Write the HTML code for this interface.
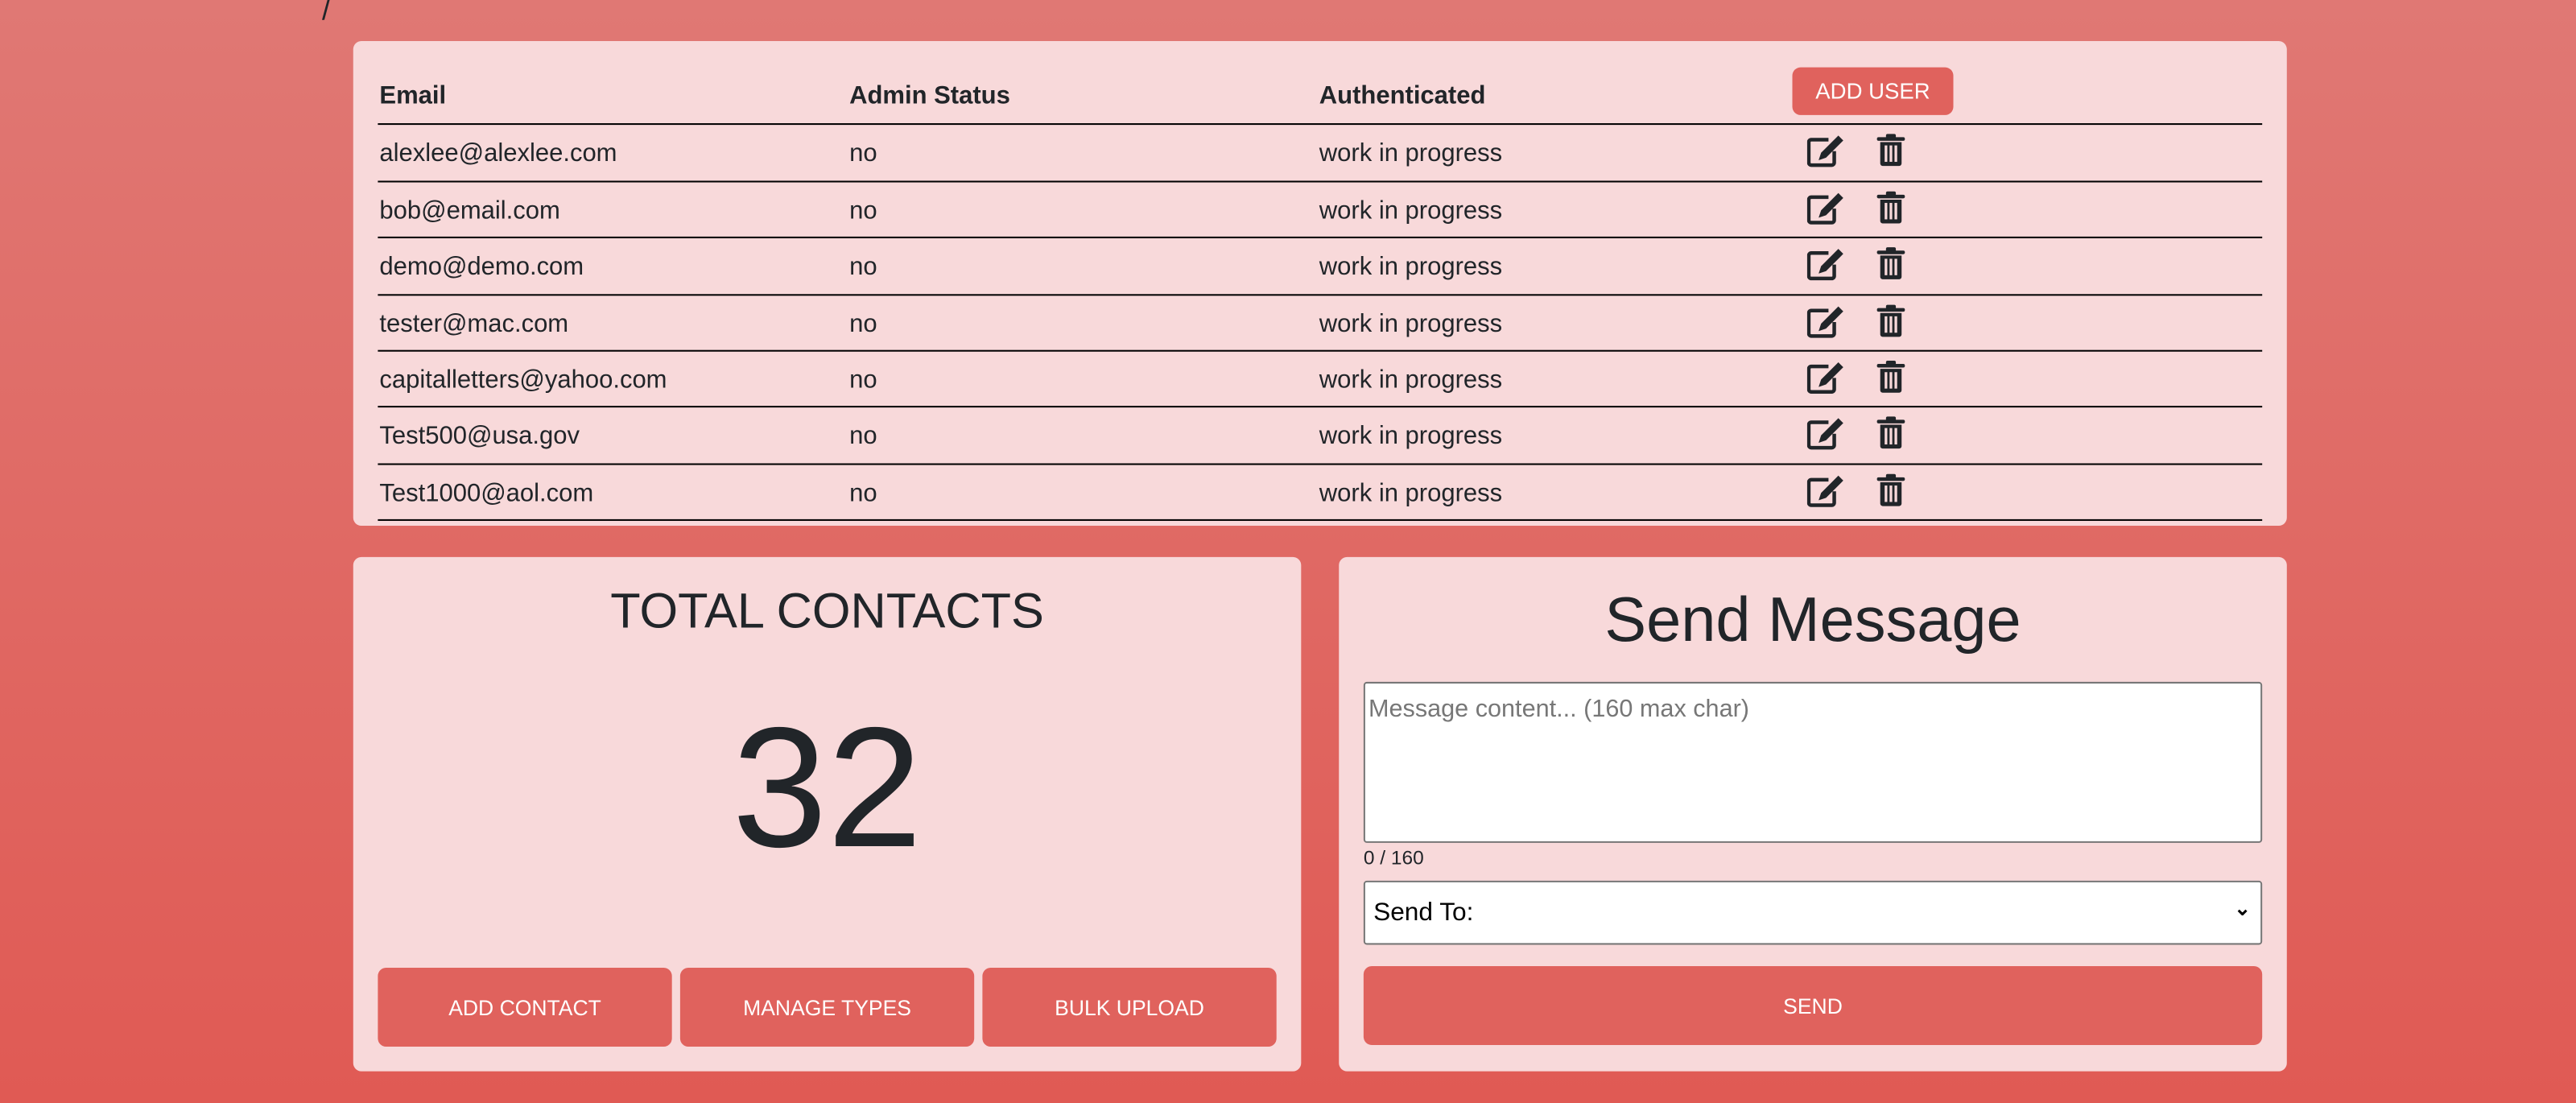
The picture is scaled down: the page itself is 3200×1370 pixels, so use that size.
<!DOCTYPE html>
<html><head><style>
html,body{margin:0;padding:0;width:3200px;height:1370px;overflow:hidden}
body{background:linear-gradient(#e07874,#e05a54);font-family:"Liberation Sans",sans-serif;color:#212529}
#w{position:absolute;left:0;top:0;width:1568px;height:671px;transform:scale(2.0408);transform-origin:0 0}
.card{position:absolute;background:#f8d9da;border-radius:5px}
.a{position:absolute}
.hl{position:absolute;left:230px;width:1147px;height:1.3px;background:#000}
.btn{position:absolute;background:#e0625d;color:#fff;border-radius:5px;font-size:13px;display:flex;align-items:center;justify-content:center}
.t{position:absolute;font-size:15.2px;white-space:nowrap}
</style></head><body><div id="w">
<div class="a" style="left:196px;top:-4px;font-size:18px">/</div>
<div class="card" style="left:215px;top:25px;width:1177px;height:295px"></div>
<div class="t" style="left:231px;top:50px;font-weight:bold">Email</div>
<div class="t" style="left:517px;top:50px;font-weight:bold">Admin Status</div>
<div class="t" style="left:803px;top:50px;font-weight:bold">Authenticated</div>
<div class="btn" style="left:1091px;top:41px;width:98px;height:29px;font-size:13.5px">ADD USER</div>
<div id="rows"></div>
<div class="card" style="left:215px;top:339px;width:577px;height:313px"></div>
<div class="a" style="left:215px;width:577px;top:356px;text-align:center;font-size:30px">TOTAL CONTACTS</div>
<div class="a" style="left:215px;width:577px;top:420px;text-align:center;font-size:104px;line-height:120px">32</div>
<div class="btn" style="left:230px;top:589px;width:179px;height:48px">ADD CONTACT</div>
<div class="btn" style="left:414px;top:589px;width:179px;height:48px">MANAGE TYPES</div>
<div class="btn" style="left:598px;top:589px;width:179px;height:48px">BULK UPLOAD</div>
<div class="card" style="left:815px;top:339px;width:577px;height:313px"></div>
<div class="a" style="left:815px;width:577px;top:357px;text-align:center;font-size:38px">Send Message</div>
<div class="a" style="left:830px;top:415px;width:545px;height:96px;background:#fff;border:1px solid #777;border-radius:2px"><div style="padding:7px 2px;color:#777;font-size:15px">Message content... (160 max char)</div></div>
<div class="a" style="left:830px;top:515px;font-size:12px">0 / 160</div>
<div class="a" style="left:830px;top:536px;width:545px;height:37px;background:#fff;border:1px solid #777;border-radius:2px"><div style="position:absolute;left:5px;top:10px;font-size:15.5px;color:#000">Send To:</div><div style="position:absolute;right:6px;top:9px;font-size:12px;color:#000;font-weight:bold">&#8964;</div></div>
<div class="btn" style="left:830px;top:588px;width:547px;height:48px">SEND</div>
</div>
<script>
var d=[["alexlee@alexlee.com"],["bob@email.com"],["demo@demo.com"],["tester@mac.com"],["capitalletters@yahoo.com"],["Test500@usa.gov"],["Test1000@aol.com"]];
var lines=[75,110,144,179,213,247,282,316],h='';
lines.forEach(function(y){h+='<div class="hl" style="top:'+y+'px"></div>'});
d.forEach(function(r,i){var y=lines[i];
h+='<div class="t" style="left:231px;top:'+(y+10)+'px">'+r[0]+'</div><div class="t" style="left:517px;top:'+(y+10)+'px">no</div><div class="t" style="left:803px;top:'+(y+10)+'px">work in progress</div>';
h+='<svg class="a" style="left:1100px;top:'+(y+6)+'px" width="24" height="21" viewBox="0 0 24 21"><path d="M13 4H2.5a1.5 1.5 0 0 0-1.5 1.5v12.5a1.5 1.5 0 0 0 1.5 1.5h12.5a1.5 1.5 0 0 0 1.5-1.5V11" fill="none" stroke="#212529" stroke-width="2.2"/><path d="M19 1.5l3 3-10.5 10.5-4.5 1.5 1.5-4.5z" fill="#212529"/></svg>';
h+='<svg class="a" style="left:1142px;top:'+(y+6)+'px" width="18" height="21" viewBox="0 0 18 21"><rect x="0.5" y="2.5" width="17" height="2.2" rx="1" fill="#212529"/><rect x="6" y="0.5" width="6" height="3" rx="1" fill="#212529"/><path d="M2.5 5.5h13v13a1.5 1.5 0 0 1-1.5 1.5H4a1.5 1.5 0 0 1-1.5-1.5z" fill="#212529"/><rect x="5.2" y="7.5" width="1.6" height="10" fill="#f8d9da"/><rect x="8.2" y="7.5" width="1.6" height="10" fill="#f8d9da"/><rect x="11.2" y="7.5" width="1.6" height="10" fill="#f8d9da"/></svg>';
});
document.getElementById('rows').innerHTML=h;
</script>
</body></html>
